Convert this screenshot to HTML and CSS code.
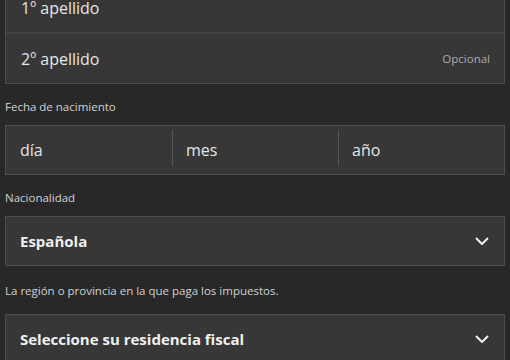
FILE: index.html
```html
<!DOCTYPE html>
<html lang="es">
<head>
    <meta charset="UTF-8">
    <meta name="viewport" content="width=device-width, initial-scale=1.0">
    <title>Datos personales</title>
    <link rel="stylesheet" href="styles.css">
</head>
<body>
    <div class="form">
        <div class="field-group">
            <div class="field-row">
                <span class="field-text">1º apellido</span>
            </div>
            <div class="field-row">
                <span class="field-text">2º apellido</span>
                <span class="field-hint">Opcional</span>
            </div>
        </div>

        <p class="label">Fecha de nacimiento</p>
        <div class="date-box">
            <div class="date-part">día</div>
            <div class="date-part">mes</div>
            <div class="date-part">año</div>
        </div>

        <p class="label">Nacionalidad</p>
        <div class="select-box">
            <span class="select-text">Española</span>
            <svg class="chevron" width="14" height="8" viewBox="0 0 14 8"><polyline points="1,1 7,7 13,1" fill="none" stroke="#f2f2f2" stroke-width="2"/></svg>
        </div>

        <p class="label label-help">La región o provincia en la que paga los impuestos.</p>
        <div class="select-box">
            <span class="select-text">Seleccione su residencia fiscal</span>
            <svg class="chevron" width="14" height="8" viewBox="0 0 14 8"><polyline points="1,1 7,7 13,1" fill="none" stroke="#f2f2f2" stroke-width="2"/></svg>
        </div>
    </div>
</body>
</html>
```

FILE: styles.css
```css
body {
    margin: 0;
    background-color: #282828;
    font-family: "Open Sans", "Noto Sans", sans-serif;
    color: #e6e6e6;
    overflow: hidden;
}

.form {
    margin: -17px 5px 0 5px;
}

.field-group {
    background-color: #373737;
    border: 1px solid #4e4e4e;
    border-top: none;
}

.field-row {
    height: 49px;
    display: flex;
    align-items: center;
    justify-content: space-between;
    padding: 0 14px 0 15px;
}

.field-row + .field-row {
    border-top: 2px solid #434343;
}

.field-text {
    font-size: 16px;
}

.field-hint {
    font-size: 11.5px;
    color: #aaaaaa;
}

.label {
    margin: 15px 0 10px 0;
    font-size: 11.5px;
    line-height: 16px;
    color: #d2d2d2;
}

.label-help {
    margin: 17px 0 15px 0;
}

.date-box {
    display: grid;
    grid-template-columns: 1fr 1fr 1fr;
    height: 48px;
    background-color: #373737;
    border: 1px solid #4e4e4e;
}

.date-part {
    display: flex;
    align-items: center;
    padding-left: 14px;
    font-size: 16px;
    position: relative;
}

.date-part + .date-part::before {
    content: "";
    position: absolute;
    left: 0;
    top: 4px;
    bottom: 8px;
    border-left: 1px solid #555555;
}

.select-box {
    height: 48px;
    display: flex;
    align-items: center;
    justify-content: space-between;
    padding: 0 15px 0 14px;
    background-color: #373737;
    border: 1px solid #4e4e4e;
}

.select-text {
    font-size: 15px;
    font-weight: bold;
    color: #f0f0f0;
}
```
